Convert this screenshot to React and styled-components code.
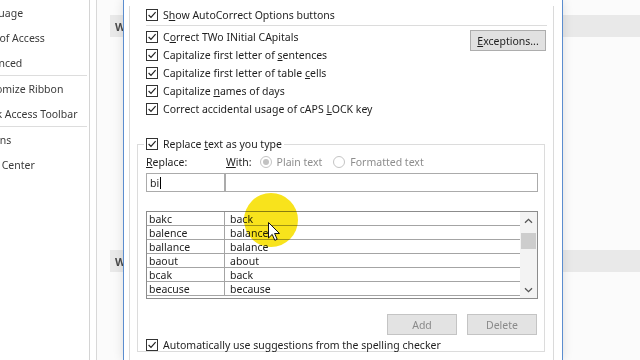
import React from "react";
import styled, { createGlobalStyle } from "styled-components";

const GlobalStyle = createGlobalStyle`
  html, body { margin: 0; padding: 0; width: 640px; height: 360px; overflow: hidden; background: #fff; }
  body { font-family: "Noto Sans", "Open Sans", sans-serif; }
  #root { width: 640px; height: 360px; }
  * { box-sizing: border-box; }
`;

const Screen = styled.div`
  position: relative;
  display: flex;
  width: 640px;
  height: 360px;
  overflow: hidden;
`;

const Nav = styled.nav`
  flex: none;
  width: 90px;
  border-right: 1px solid #d4d4d4;
  overflow: hidden;
  background: #fff;
`;

const NavList = styled.div`
  margin-left: -26px;
`;

const NavItem = styled.div`
  height: 25px;
  display: flex;
  align-items: center;
  font-size: 10.5px;
  color: #3a3a3a;
  white-space: nowrap;
`;

const NavDivider = styled.div`
  height: 1px;
  background: #dddddd;
  margin: 0 2px 0 26px;
`;

const Gutter = styled.div`
  flex: none;
  width: 7px;
  border-right: 1px solid #d8d8d8;
  background: #fff;
`;

const OptionsArea = styled.div`
  flex: 1;
  display: flex;
  flex-direction: column;
  padding: 15px 0 0 13px;
  background: #fbfbfb;
`;

const SectionBand = styled.div`
  height: 22px;
  margin-top: ${(p) => p.$top || 0}px;
  display: flex;
  align-items: center;
  padding-left: 5px;
  background: #e9e9e9;
  font-size: 11px;
  font-weight: 700;
  color: #4a4a4a;
  white-space: nowrap;
  overflow: hidden;
`;

const Dialog = styled.div`
  position: absolute;
  top: 0;
  left: 123px;
  width: 440px;
  height: 360px;
  background: #fff;
  border-left: 1px solid #5b8dcf;
  border-right: 1px solid #5b8dcf;
  padding: 0 8px 0 5px;
  box-shadow: 0 0 10px rgba(0, 0, 0, 0.12);
`;

const TabPage = styled.div`
  height: 100%;
  border: 1px solid #dadada;
  border-top: none;
  padding: 0 6px 0 7px;
  color: #1e1e1e;
  font-size: 10.5px;
`;

const TopSection = styled.div`
  padding-left: 9px;
`;

const CheckRow = styled.div`
  display: flex;
  align-items: center;
  gap: 5px;
  height: ${(p) => p.$h || 18}px;
  margin-top: ${(p) => p.$mt || 0}px;
  white-space: nowrap;
  line-height: 14px;
`;

const Box = styled.span`
  flex: none;
  display: inline-flex;
  width: 12px;
  height: 12px;
  border: 1px solid #333;
  background: #fff;
`;

const U = styled.span`
  text-decoration: underline;
  text-underline-offset: 1px;
`;

const Divider = styled.div`
  height: 1px;
  margin-top: 1px;
  background: #dcdcdc;
`;

const ChecksArea = styled.div`
  display: flex;
  justify-content: space-between;
  align-items: flex-start;
  padding-top: 2px;
`;

const ChecksCol = styled.div`
  display: flex;
  flex-direction: column;
`;

const Button = styled.button`
  width: ${(p) => p.$w || 70}px;
  height: 21px;
  margin: ${(p) => p.$m || 0};
  padding: 0;
  font-family: inherit;
  font-size: 10.5px;
  background: ${(p) => (p.disabled ? "#e3e3e3" : "#e1e1e1")};
  border: 1px solid ${(p) => (p.disabled ? "#c4c4c4" : "#adadad")};
  color: ${(p) => (p.disabled ? "#8a8a8a" : "#1e1e1e")};
`;

const GroupBox = styled.fieldset`
  margin: 18px 2px 0 0;
  padding: 0 6px 0 8px;
  min-inline-size: 0;
  border: 1px solid #dcdcdc;
`;

const Legend = styled.legend`
  padding: 0 2px;
  margin-left: -2px;
  display: flex;
  align-items: center;
  gap: 5px;
  height: 16px;
  white-space: nowrap;
`;

const FieldGrid = styled.div`
  display: grid;
  grid-template-columns: 79px 1fr;
  height: ${(p) => p.$h}px;
  margin-top: ${(p) => p.$mt}px;
  align-items: center;
  line-height: 14px;
`;

const WithGroup = styled.div`
  display: flex;
  align-items: center;
  padding-left: 1px;
  white-space: nowrap;
`;

const RadioItem = styled.span`
  display: inline-flex;
  align-items: center;
  gap: 5px;
  margin-left: ${(p) => p.$ml}px;
  color: #8d8d8d;
`;

const Radio = styled.span`
  flex: none;
  width: 12px;
  height: 12px;
  border-radius: 50%;
  border: 1px solid #c4c4c4;
  background: #fff;
  display: inline-flex;
  align-items: center;
  justify-content: center;
  &::after {
    content: "";
    width: 6px;
    height: 6px;
    border-radius: 50%;
    background: ${(p) => (p.$on ? "#c2c2c2" : "transparent")};
  }
`;

const Field = styled.div`
  height: 19px;
  border: 1px solid #ababab;
  background: #fff;
  display: flex;
  align-items: center;
  padding-left: 3px;
`;

const Caret = styled.span`
  display: inline-block;
  width: 1px;
  height: 12px;
  background: #000;
  margin-left: 1px;
`;

const ListBox = styled.div`
  display: flex;
  height: 88px;
  margin-top: 19px;
  border: 1px solid #8c8c8c;
  overflow: hidden;
`;

const ListRows = styled.div`
  flex: 1;
`;

const ListRow = styled.div`
  display: grid;
  grid-template-columns: 78px 1fr;
  height: 14px;
  border-bottom: 1px solid #a4a4a4;
`;

const Cell = styled.div`
  padding: 1px 0 0 ${(p) => (p.$first ? 2 : 5)}px;
  line-height: 12px;
  border-right: ${(p) => (p.$first ? "1px solid #a4a4a4" : "none")};
`;

const ScrollBar = styled.div`
  flex: none;
  width: 17px;
  background: #f3f3f3;
  display: flex;
  flex-direction: column;
`;

const ScrollArrow = styled.div`
  height: 17px;
  display: flex;
  align-items: center;
  justify-content: center;
`;

const Thumb = styled.div`
  height: 16px;
  margin: 4px 1px 0;
  background: #cdcdcd;
`;

const Spacer = styled.div`
  flex: 1;
`;

const ButtonRow = styled.div`
  display: flex;
  justify-content: flex-end;
  gap: 10px;
  margin-top: 15px;
  padding-right: 1px;
`;

const Highlight = styled.div`
  position: absolute;
  left: 244px;
  top: 193px;
  width: 54px;
  height: 54px;
  border-radius: 50%;
  background: #f8e31c;
  mix-blend-mode: multiply;
  pointer-events: none;
`;

const Cursor = styled.svg`
  position: absolute;
  left: 268px;
  top: 222px;
  pointer-events: none;
`;

const Check = () => (
  <Box>
    <svg width="10" height="10" viewBox="0 0 10 10">
      <path d="M1.6 5 L4 7.4 L8.6 2.2" fill="none" stroke="#222" strokeWidth="1.2" />
    </svg>
  </Box>
);

const Chevron = ({ down }) => (
  <svg width="9" height="6" viewBox="0 0 9 6">
    <path
      d={down ? "M1 1.2 L4.5 4.6 L8 1.2" : "M1 4.8 L4.5 1.4 L8 4.8"}
      fill="none"
      stroke="#555"
      strokeWidth="1.3"
    />
  </svg>
);

const rows = [
  ["bakc", "back"],
  ["balence", "balance"],
  ["ballance", "balance"],
  ["baout", "about"],
  ["bcak", "back"],
  ["beacuse", "because"],
];

export default function App() {
  return (
    <>
      <GlobalStyle />
      <Screen>
        <Nav>
          <NavList>
            <NavItem>Language</NavItem>
            <NavItem>Ease of Access</NavItem>
            <NavItem>Advanced</NavItem>
            <NavDivider />
            <NavItem>Customize Ribbon</NavItem>
            <NavItem>Quick Access Toolbar</NavItem>
            <NavDivider />
            <NavItem>Add-ins</NavItem>
            <NavItem>Trust Center</NavItem>
          </NavList>
        </Nav>
        <Gutter />
        <OptionsArea>
          <SectionBand>When correcting spelling and grammar in Word</SectionBand>
          <SectionBand $top={213}>When correcting spelling in Microsoft Office programs</SectionBand>
        </OptionsArea>

        <Dialog>
          <TabPage>
            <TopSection>
              <CheckRow $mt={6}>
                <Check />
                <span>S<U>h</U>ow AutoCorrect Options buttons</span>
              </CheckRow>
              <Divider />
              <ChecksArea>
                <ChecksCol>
                  <CheckRow>
                    <Check />
                    <span>C<U>o</U>rrect TWo INitial CApitals</span>
                  </CheckRow>
                  <CheckRow>
                    <Check />
                    <span>Capitalize first letter of <U>s</U>entences</span>
                  </CheckRow>
                  <CheckRow>
                    <Check />
                    <span>Capitalize first letter of table <U>c</U>ells</span>
                  </CheckRow>
                  <CheckRow>
                    <Check />
                    <span>Capitalize <U>n</U>ames of days</span>
                  </CheckRow>
                  <CheckRow>
                    <Check />
                    <span>Correct accidental usage of cAPS <U>L</U>OCK key</span>
                  </CheckRow>
                </ChecksCol>
                <Button $w={76} $m="2px 1px 0 0">
                  <U>E</U>xceptions...
                </Button>
              </ChecksArea>
            </TopSection>

            <GroupBox>
              <Legend>
                <Check />
                <span>Replace <U>t</U>ext as you type</span>
              </Legend>
              <FieldGrid $h={14} $mt={3}>
                <span><U>R</U>eplace:</span>
                <WithGroup>
                  <span><U>W</U>ith:</span>
                  <RadioItem $ml={8}>
                    <Radio $on />
                    <span>Plain text</span>
                  </RadioItem>
                  <RadioItem $ml={11}>
                    <Radio />
                    <span>Formatted text</span>
                  </RadioItem>
                </WithGroup>
              </FieldGrid>
              <FieldGrid $h={19} $mt={4}>
                <Field>
                  bi<Caret />
                </Field>
                <Field />
              </FieldGrid>
              <ListBox>
                <ListRows>
                  {rows.map(([a, b]) => (
                    <ListRow key={a}>
                      <Cell $first>{a}</Cell>
                      <Cell>{b}</Cell>
                    </ListRow>
                  ))}
                </ListRows>
                <ScrollBar>
                  <ScrollArrow>
                    <Chevron />
                  </ScrollArrow>
                  <Thumb />
                  <Spacer />
                  <ScrollArrow>
                    <Chevron down />
                  </ScrollArrow>
                </ScrollBar>
              </ListBox>
              <ButtonRow>
                <Button disabled>Add</Button>
                <Button disabled>Delete</Button>
              </ButtonRow>
              <CheckRow $h={12} $mt={4}>
                <Check />
                <span>Automatically use suggestions from the spelling checker</span>
              </CheckRow>
            </GroupBox>
          </TabPage>
        </Dialog>

        <Highlight />
        <Cursor width="13" height="20" viewBox="0 0 13 20">
          <path
            d="M0.5 0.5 L0.5 16 L4.2 12.4 L6.8 18.3 L9.2 17.3 L6.6 11.5 L11.5 11.5 Z"
            fill="#fff"
            stroke="#111"
            strokeWidth="1"
            strokeLinejoin="round"
          />
        </Cursor>
      </Screen>
    </>
  );
}
